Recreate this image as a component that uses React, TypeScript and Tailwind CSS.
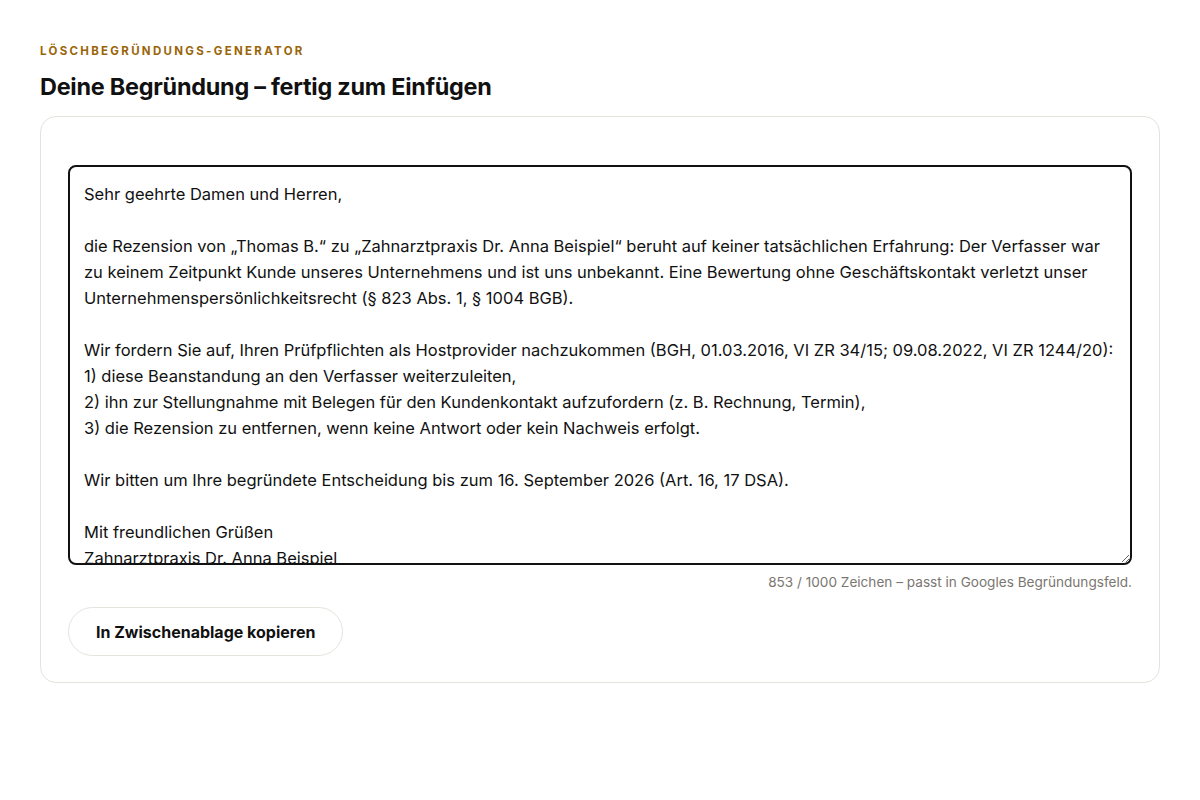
import React from "react";

const text = `Sehr geehrte Damen und Herren,

die Rezension von „Thomas B.“ zu „Zahnarztpraxis Dr. Anna Beispiel“ beruht auf keiner tatsächlichen Erfahrung: Der Verfasser war zu keinem Zeitpunkt Kunde unseres Unternehmens und ist uns unbekannt. Eine Bewertung ohne Geschäftskontakt verletzt unser Unternehmenspersönlichkeitsrecht (§ 823 Abs. 1, § 1004 BGB).

Wir fordern Sie auf, Ihren Prüfpflichten als Hostprovider nachzukommen (BGH, 01.03.2016, VI ZR 34/15; 09.08.2022, VI ZR 1244/20):
1) diese Beanstandung an den Verfasser weiterzuleiten,
2) ihn zur Stellungnahme mit Belegen für den Kundenkontakt aufzufordern (z. B. Rechnung, Termin),
3) die Rezension zu entfernen, wenn keine Antwort oder kein Nachweis erfolgt.

Wir bitten um Ihre begründete Entscheidung bis zum 16. September 2026 (Art. 16, 17 DSA).

Mit freundlichen Grüßen
Zahnarztpraxis Dr. Anna Beispiel`;

export default function App() {
  return (
    <div className="min-h-[800px] bg-white px-10 pt-[44px] font-['Inter',sans-serif] text-[#111]">
      <div className="text-[11.5px] font-bold uppercase tracking-[0.2em] text-[#9a6508] leading-[14px]">
        Löschbegründungs-Generator
      </div>
      <h1 className="mt-[14px] text-[23.4px] font-bold leading-[30px] tracking-[-0.01em] text-[#111]">
        Deine Begründung – fertig zum Einfügen
      </h1>
      <div className="mt-[14px] rounded-[16px] border border-[#e6e3dd] px-[27px] pt-[48px] pb-[26px]">
        <textarea
          defaultValue={text}
          spellCheck={false}
          className="block h-[400px] w-full resize-y rounded-[8px] border-2 border-[#111] px-[14px] py-[14px] font-['Inter',sans-serif] text-[16.5px] leading-[26px] text-[#111] outline-none"
        />
        <div className="mt-[8px] text-right text-[13.6px] leading-[18px] text-[#7a7670]">
          853 / 1000 Zeichen – passt in Googles Begründungsfeld.
        </div>
        <button className="mt-[16px] h-[49px] rounded-full border border-[#e6e3dd] bg-white px-[27px] text-[16px] font-bold text-[#111]">
          In Zwischenablage kopieren
        </button>
      </div>
    </div>
  );
}
